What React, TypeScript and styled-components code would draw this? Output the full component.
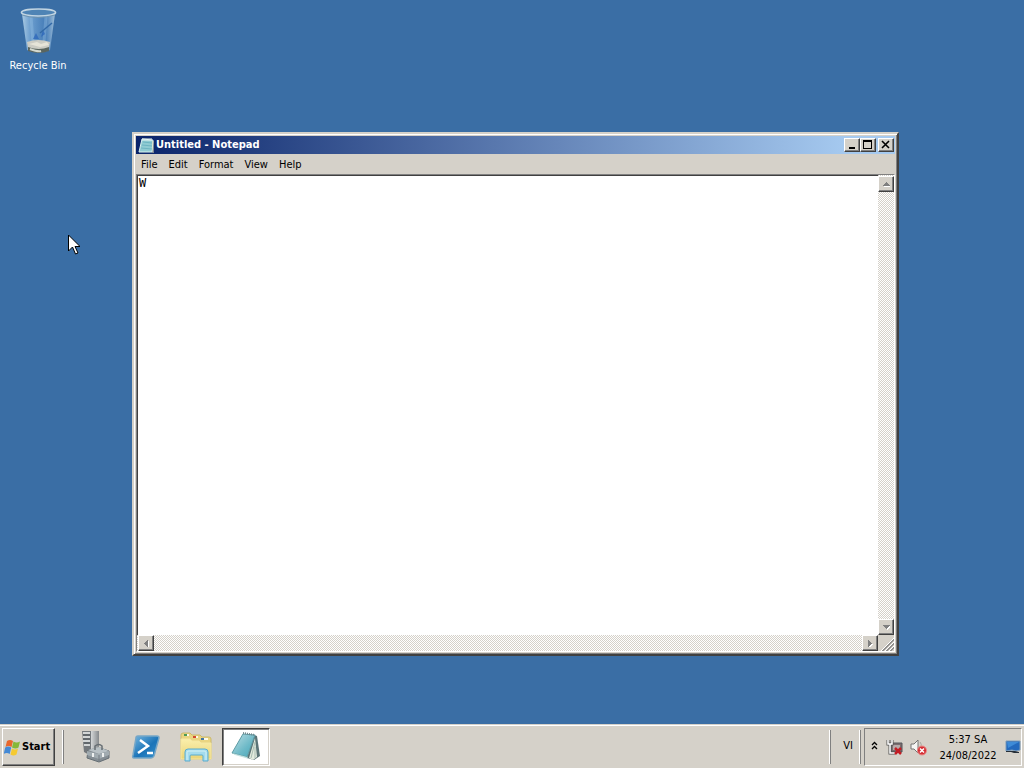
import React from "react";
import styled, { createGlobalStyle, css } from "styled-components";

const FACE = "#d5d1c9";
const UI_FONT = '"DejaVu Sans Condensed", "DejaVu Sans", sans-serif';

const raised = css`
  border: 1px solid;
  border-color: #ffffff #404040 #404040 #ffffff;
  box-shadow: inset -1px -1px 0 #808080;
`;

const GlobalStyle = createGlobalStyle`
  *, *::before, *::after { box-sizing: border-box; }
  body {
    margin: 0;
    font-family: ${UI_FONT};
    font-size: 11px;
    line-height: 16px;
    color: #000000;
  }
  button, textarea { font: inherit; color: inherit; }
`;

const Screen = styled.div`
  display: flex;
  flex-direction: column;
  height: 100vh;
  background: #3a6ea5;
  overflow: hidden;
  cursor: default;
`;

const Desktop = styled.main`
  position: relative;
  flex: 1;
  min-height: 0;
`;

const DesktopIcon = styled.button`
  display: flex;
  flex-direction: column;
  align-items: center;
  width: 76px;
  padding: 6px 0 0;
  border: 0;
  background: none;
  color: #ffffff;
  gap: 4px;
`;

const Pointer = styled.svg`
  position: absolute;
  left: 68px;
  top: 234px;
`;

const AppWindow = styled.section`
  position: absolute;
  left: 132px;
  right: 125px;
  top: 132px;
  bottom: 68px;
  display: flex;
  flex-direction: column;
  padding: 2px;
  background: ${FACE};
  border: 2px solid;
  border-color: ${FACE} #404040 #404040 ${FACE};
  box-shadow: inset 1px 1px 0 #ffffff, inset -1px -1px 0 #808080;
`;

const TitleBar = styled.header`
  display: flex;
  align-items: center;
  height: 18px;
  padding: 0 1px 0 2px;
  gap: 1px;
  background: linear-gradient(to right, #0a246a, #a6caf0 94%);
`;

const Title = styled.h1`
  flex: 1;
  margin: 0;
  font-size: 11px;
  line-height: 18px;
  font-weight: bold;
  color: #ffffff;
`;

const CaptionButtons = styled.div`
  display: flex;
`;

const CaptionButton = styled.button<{ $gap?: boolean }>`
  ${raised}
  display: grid;
  place-items: center;
  width: 16px;
  height: 14px;
  padding: 0;
  margin-left: ${(p) => (p.$gap ? "2px" : "0")};
  background: ${FACE};
`;

const MenuBar = styled.nav`
  display: flex;
  height: 20px;
  gap: 1px;
`;

const MenuItem = styled.button`
  padding: 1px 5px 0;
  border: 0;
  background: none;
`;

const Editor = styled.div`
  flex: 1;
  min-height: 0;
  display: grid;
  grid-template-columns: 1fr 16px;
  grid-template-rows: 1fr 16px;
  border: 1px solid;
  border-color: #808080 #ffffff #ffffff #808080;
`;

const TextArea = styled.textarea`
  width: 100%;
  height: 100%;
  padding: 0 1px;
  border: solid #404040;
  border-width: 1px 0 0 1px;
  outline: 0;
  resize: none;
  overflow: hidden;
  background: #ffffff;
  font: 12px/14px "DejaVu Sans Mono", monospace;
`;

const ScrollBar = styled.div<{ $vertical?: boolean }>`
  display: flex;
  flex-direction: ${(p) => (p.$vertical ? "column" : "row")};
  justify-content: space-between;
  padding: ${(p) => (p.$vertical ? "1px 0 0" : "0 0 0 1px")};
  background: repeating-conic-gradient(#ffffff 0 25%, ${FACE} 0 50%) 0 0 / 2px 2px;
`;

const ScrollButton = styled.button`
  ${raised}
  display: grid;
  place-items: center;
  width: 16px;
  height: 16px;
  padding: 0;
  background: ${FACE};
`;

const SizeGrip = styled.div`
  display: grid;
  place-items: end;
  background: ${FACE};
`;

const TaskBar = styled.footer`
  display: flex;
  align-items: center;
  height: 44px;
  padding: 1px 2px 0;
  border-top: 1px solid ${FACE};
  box-shadow: inset 0 1px 0 #ffffff;
  background: ${FACE};
`;

const StartButton = styled.button`
  ${raised}
  display: flex;
  align-items: center;
  gap: 1px;
  width: 53px;
  height: 38px;
  margin-right: 7px;
  padding: 0 0 0 1px;
  background: ${FACE};
  font-weight: bold;
`;

const Divider = styled.span`
  width: 2px;
  height: 34px;
  border-left: 1px solid #ffffff;
  border-right: 1px solid #808080;
`;

const TaskButtons = styled.div`
  display: flex;
  flex: 1;
  gap: 2px;
  padding: 0 8px;
`;

const TaskButton = styled.button<{ $active?: boolean }>`
  display: grid;
  place-items: center;
  width: 48px;
  height: 38px;
  padding: 0;
  border: 1px solid transparent;
  background: none;
  ${(p) =>
    p.$active &&
    css`
      background: #ffffff;
      border-color: #404040 #ffffff #ffffff #404040;
      box-shadow: inset 1px 1px 0 #808080, inset -1px -1px 0 ${FACE};
    `}
`;

const LanguageButton = styled.button`
  width: 28px;
  height: 36px;
  padding: 0 0 2px 6px;
  border: 0;
  background: none;
`;

const Tray = styled.div`
  display: flex;
  align-items: center;
  height: 38px;
  margin-left: 3px;
  padding-left: 4px;
  border: 1px solid;
  border-color: #808080 #ffffff #ffffff #808080;
`;

const TrayButton = styled.button<{ $width: number }>`
  display: grid;
  place-items: center;
  width: ${(p) => p.$width}px;
  height: 24px;
  padding: 0;
  border: 0;
  background: none;
`;

const Clock = styled.time`
  width: 78px;
  padding: 2px 0 0 4px;
  text-align: center;
`;

const RecycleBinIcon = () => (
  <svg width="40" height="48" viewBox="0 0 40 48" aria-hidden="true">
    <defs>
      <linearGradient id="bin" x1="0" x2="1">
        <stop offset="0" stopColor="#b9d6ea" stopOpacity=".9" />
        <stop offset=".25" stopColor="#7fb0dd" stopOpacity=".75" />
        <stop offset=".7" stopColor="#5089c6" stopOpacity=".6" />
        <stop offset="1" stopColor="#b5cfe2" stopOpacity=".85" />
      </linearGradient>
    </defs>
    <path d="M4 8 9 44q12 6 23 0l5-36z" fill="url(#bin)" />
    <path d="M13 10 15 36M28 10l-2 26" stroke="#9cc6e8" strokeWidth="3" opacity=".35" />
    <path d="M9 36q11-4 23 0l-1 6q-10 4-21 0z" fill="#ccccc4" />
    <path d="m11 38 8-2 4 2 6-2 2 3-9 2z" fill="#e6e4d8" />
    <path d="M10 41q11 4 21 0v4q-10 4-21 0z" fill="#5a655f" />
    <path d="M12 43q8 3 11 2" stroke="#d5d9cf" strokeWidth="2" fill="none" />
    <path d="m15 33 3-6 3 6zM23 31l2-7 2 4z" fill="#2b66ba" opacity=".75" />
    <path d="m22 27 12-10" stroke="#3269a7" strokeWidth="1.500" />
    <ellipse cx="20.500" cy="6.500" rx="17" ry="3.500" fill="#4f84b5" stroke="#c2d5e2" strokeWidth="1.700" />
    <path d="M4 9q15 5 33 0" stroke="#6d93b1" fill="none" />
  </svg>
);

const NotepadSmallIcon = () => (
  <svg width="17" height="17" viewBox="0 0 17 17" aria-hidden="true">
    <path d="m4 2 11 1-1 12H1z" fill="#8fcbd2" stroke="#d9f1ef" />
    <path d="m5 5 9 1M4 8l10 1M3 11l11 1" stroke="#6db5c2" />
    <path d="M15 4v12" stroke="#e9e5bd" />
    <path d="M5 1v3m2-3v3m2-3v3m2-3v3m2-3v3" stroke="#edf8f4" />
  </svg>
);

const WindowsLogo = () => (
  <svg width="17" height="17" viewBox="0 0 17 17" aria-hidden="true">
    <path d="M3 2q3-2 6 0L7.500 8q-3-2-6 0z" fill="#e8672c" />
    <path d="M9.500 2.500q3 2 6.500 0l-1.500 6q-3 2-6.500 0z" fill="#86b839" />
    <path d="M1.200 8.500q3-2 6 0L5.700 15q-3-2-6 0z" fill="#4489d5" />
    <path d="M8 9.500q3 2 6 0l-1.500 6q-3 2-6 0z" fill="#f5ca31" />
  </svg>
);

const ServerManagerIcon = () => (
  <svg width="32" height="32" viewBox="0 0 32 32" aria-hidden="true">
    <defs>
      <linearGradient id="tower" x1="0" x2="1">
        <stop offset="0" stopColor="#d5d8d9" />
        <stop offset="1" stopColor="#85898c" />
      </linearGradient>
    </defs>
    <path d="M2 0h9v25l-7-4z" fill="#73787c" />
    <path d="M11 0h8v22l-8 3z" fill="url(#tower)" />
    <path d="M3 2h7M3 6h7M3 10h7M4 14h6" stroke="#f4f5f4" strokeWidth="1.500" />
    <path d="M3 4h7M3 8h7M4 12h6" stroke="#53585c" />
    <path d="m8 19 12-2 9 3v7l-10 4-12-4z" fill="#858e94" stroke="#656e74" />
    <path d="m8 19 11-3 10 4-10 3z" fill="#b8c1c5" />
    <path d="m7 20 12 3 10-3v4l-10 4-12-4z" fill="#a1abb0" />
    <path d="M15 19v-4q4-3 7 0v4" fill="none" stroke="#666e73" strokeWidth="1.500" />
    <path d="M13 22v4m10-4v4" stroke="#edf0ef" strokeWidth="2" />
    <path d="M19 24v6" stroke="#737b81" />
  </svg>
);

const PowerShellIcon = () => (
  <svg width="30" height="26" viewBox="0 0 30 26" aria-hidden="true">
    <defs>
      <linearGradient id="shell" x1="0" y1="0" x2="1" y2="1">
        <stop offset="0" stopColor="#76b6df" />
        <stop offset=".55" stopColor="#1b74b8" />
        <stop offset="1" stopColor="#3791cc" />
      </linearGradient>
    </defs>
    <path d="M7 2h19q2 0 2 2l-5 18q-1 2-3 2H3q-2 0-1-3L5 4q0-2 2-2z" fill="url(#shell)" stroke="#76a6c6" strokeWidth="1.500" />
    <path d="m9 6 8 6-10 7m9 0h6" fill="none" stroke="#ffffff" strokeWidth="2.500" />
  </svg>
);

const ExplorerIcon = () => (
  <svg width="34" height="32" viewBox="0 0 34 32" aria-hidden="true">
    <defs>
      <linearGradient id="folder" x1="0" y1="0" x2="0" y2="1">
        <stop offset="0" stopColor="#faefac" />
        <stop offset="1" stopColor="#ead477" />
      </linearGradient>
    </defs>
    <path d="M2 28V4q0-2 2-2h7l2 2h8l2 2h7q2 0 2 2v20z" fill="#ead581" stroke="#cbb96d" />
    <path d="M5 4h5m4 2h5m4 2h6" stroke="#fffbe8" strokeWidth="2" />
    <path d="M5 4h3" stroke="#4d9b55" strokeWidth="2" />
    <path d="M14 6h3" stroke="#d24931" strokeWidth="2" />
    <path d="M22 8h3" stroke="#4375a5" strokeWidth="2" />
    <path d="M2 8h9l2 2h7l2 2h10v16H2z" fill="url(#folder)" stroke="#f5e7a2" />
    <path d="M6 30V21q0-3 3-3h17q3 0 3 3v9h-5v-5q0-1-1-1H12q-1 0-1 1v5z" fill="#a4dced" stroke="#5bacce" />
    <path d="M8 29V21q0-1 2-1h15q2 0 2 1v8" fill="none" stroke="#d3f1f5" />
  </svg>
);

const NotepadIcon = () => (
  <svg width="32" height="32" viewBox="0 0 32 32" aria-hidden="true">
    <defs>
      <linearGradient id="pad" x1="0" y1="0" x2="1" y2="1">
        <stop offset="0" stopColor="#bfdfe4" />
        <stop offset=".6" stopColor="#6cb9c7" />
        <stop offset="1" stopColor="#45a6b9" />
      </linearGradient>
    </defs>
    <path d="m24 4 3 1 3 20-6 4-7-2z" fill="#5a7376" />
    <path d="m25 7-6 20 4 2 4-3z" fill="#e3ebdf" />
    <path d="m25 11-4 16M25 16v11" stroke="#a8bdb2" />
    <path d="m13 3 12 1-8 22-15-4z" fill="url(#pad)" stroke="#5d9ba4" />
    <path d="m2 22 15 4 2 2-14-4z" fill="#c2e0df" />
    <path d="m13 2 12 2" stroke="#6f868b" strokeWidth="2" strokeDasharray="1 1" />
  </svg>
);

const NetworkIcon = () => (
  <svg width="17" height="17" viewBox="0 0 17 17" aria-hidden="true">
    <path d="M5 4h11v9H5z" fill="#7b6c6e" stroke="#55575a" />
    <path d="M7 6h7v5H7z" fill="#b5a9a9" />
    <path d="M2 1v4h4V1M4 5v9h5" fill="none" stroke="#555555" strokeWidth="3" />
    <path d="M2 1v4h4V1M4 5v9h5" fill="none" stroke="#ffffff" strokeWidth="1.500" />
    <path d="m9 9 6 6m0-6-6 6" stroke="#c31c24" strokeWidth="2.500" />
  </svg>
);

const VolumeIcon = () => (
  <svg width="17" height="17" viewBox="0 0 17 17" aria-hidden="true">
    <path d="M1 5h3l4-4v13l-4-4H1z" fill="#f5f5f3" stroke="#747474" />
    <path d="M10 3q2 2 1 5" fill="none" stroke="#aaa7a0" />
    <circle cx="12" cy="11.500" r="4.500" fill="#d42e34" stroke="#eb8b88" />
    <path d="m10 9.500 4 4m0-4-4 4" stroke="#ffffff" strokeWidth="1.500" />
  </svg>
);

const ShowDesktopIcon = () => (
  <svg width="16" height="14" viewBox="0 0 16 14" aria-hidden="true">
    <path d="M1 1h14v9l-4 1-4-1-6 1z" fill="#2369bd" stroke="#7d9cb9" />
    <path d="M2 2h12L3 8z" fill="#3e8bd7" />
    <path d="M1 11h9l4 1v1H9l-3-1H1z" fill="#262e37" />
  </svg>
);

const arrows = {
  up: "M0 5h7L3.500 1z",
  down: "M0 1h7L3.500 5z",
  left: "M5 0v7L1 3.500z",
  right: "M1 0v7l4-3.500z",
};

const ScrollArrow = ({ direction }: { direction: keyof typeof arrows }) => (
  <ScrollButton aria-label={`Scroll ${direction}`}>
    <svg width="7" height="7" viewBox="0 0 7 7" shapeRendering="crispEdges" aria-hidden="true">
      <path d={arrows[direction]} transform="translate(1 1)" fill="#ffffff" />
      <path d={arrows[direction]} fill="#808080" />
    </svg>
  </ScrollButton>
);

export default function App() {
  return (
    <Screen>
      <GlobalStyle />
      <Desktop>
        <DesktopIcon>
          <RecycleBinIcon />
          Recycle Bin
        </DesktopIcon>

        <AppWindow aria-label="Untitled - Notepad">
          <TitleBar>
            <NotepadSmallIcon />
            <Title>Untitled - Notepad</Title>
            <CaptionButtons>
              <CaptionButton aria-label="Minimize">
                <svg width="10" height="10" aria-hidden="true"><path d="M2 7h6v2H2z" /></svg>
              </CaptionButton>
              <CaptionButton aria-label="Maximize">
                <svg width="10" height="10" aria-hidden="true"><path fillRule="evenodd" d="M0 0h9v9H0zM1 2v6h7V2z" /></svg>
              </CaptionButton>
              <CaptionButton $gap aria-label="Close">
                <svg width="10" height="10" aria-hidden="true"><path d="m1 1 7 7m0-7-7 7" stroke="#000000" strokeWidth="1.600" /></svg>
              </CaptionButton>
            </CaptionButtons>
          </TitleBar>
          <MenuBar aria-label="Notepad menu">
            {["File", "Edit", "Format", "View", "Help"].map((name) => (
              <MenuItem key={name}>{name}</MenuItem>
            ))}
          </MenuBar>
          <Editor>
            <TextArea aria-label="Document text" defaultValue="W" spellCheck={false} />
            <ScrollBar $vertical>
              <ScrollArrow direction="up" />
              <ScrollArrow direction="down" />
            </ScrollBar>
            <ScrollBar>
              <ScrollArrow direction="left" />
              <ScrollArrow direction="right" />
            </ScrollBar>
            <SizeGrip>
              <svg width="13" height="13" aria-hidden="true">
                <path d="M0 13 13 0M4 13l9-9M8 13l5-5" stroke="#ffffff" />
                <path d="M1 13 13 1M2 13 13 2M5 13l8-8M6 13l7-7M9 13l4-4M10 13l3-3" stroke="#808080" strokeWidth=".8" />
              </svg>
            </SizeGrip>
          </Editor>
        </AppWindow>

        <Pointer width="12" height="21" viewBox="0 0 12 21" aria-hidden="true">
          <path d="M.5 1v16l4-4 3 7 2.500-1-3-6.500h5z" fill="#ffffff" stroke="#000000" />
        </Pointer>
      </Desktop>

      <TaskBar>
        <StartButton>
          <WindowsLogo />
          Start
        </StartButton>
        <Divider />
        <TaskButtons>
          <TaskButton aria-label="Server Manager"><ServerManagerIcon /></TaskButton>
          <TaskButton aria-label="Windows PowerShell"><PowerShellIcon /></TaskButton>
          <TaskButton aria-label="Windows Explorer"><ExplorerIcon /></TaskButton>
          <TaskButton $active aria-label="Untitled - Notepad"><NotepadIcon /></TaskButton>
        </TaskButtons>
        <Divider />
        <LanguageButton>VI</LanguageButton>
        <Divider />
        <Tray>
          <TrayButton $width={10} aria-label="Show hidden icons">
            <svg width="7" height="12" aria-hidden="true">
              <path d="m1 4 2.500-2.500L6 4M1 8l2.500-2.500L6 8" fill="none" stroke="#000000" strokeWidth="1.300" />
            </svg>
          </TrayButton>
          <TrayButton $width={30} aria-label="Network"><NetworkIcon /></TrayButton>
          <TrayButton $width={18} aria-label="Volume"><VolumeIcon /></TrayButton>
          <Clock>5:37 SA<br />24/08/2022</Clock>
          <TrayButton $width={16} aria-label="Show desktop"><ShowDesktopIcon /></TrayButton>
        </Tray>
      </TaskBar>
    </Screen>
  );
}
